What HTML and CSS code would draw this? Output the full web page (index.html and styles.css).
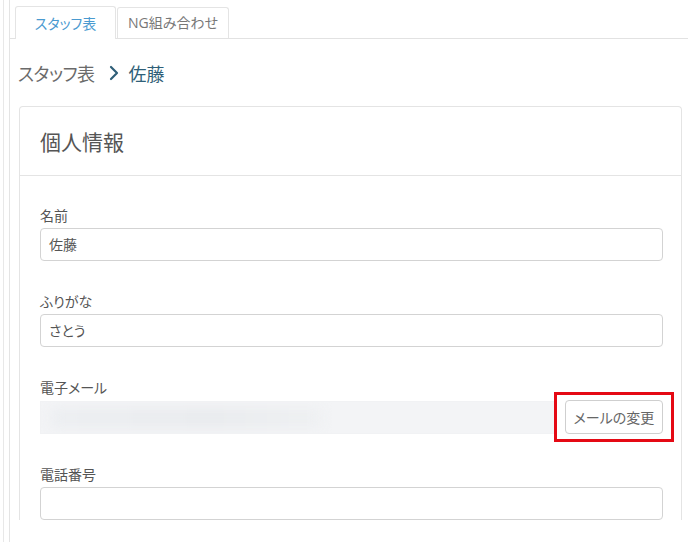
FILE: index.html
```
<!DOCTYPE html>
<html lang="ja">
<head>
    <meta charset="UTF-8">
    <meta name="viewport" content="width=device-width, initial-scale=1.0">
    <title>スタッフ表 - 佐藤</title>
    <link rel="stylesheet" href="styles.css">
</head>
<body>
    <div class="frame">
        <div class="panel">
            <!-- Tabs -->
            <div class="tabs">
                <div class="tab active">スタッフ表</div>
                <div class="tab">NG組み合わせ</div>
            </div>

            <div class="breadcrumb">
                <span class="crumb">スタッフ表</span>
                <svg class="chevron" width="10" height="16" viewBox="0 0 10 16">
                    <polyline points="2,2 8,8 2,14" fill="none" stroke="#2f5f78" stroke-width="2.2" stroke-linecap="round" stroke-linejoin="round"/>
                </svg>
                <span class="crumb current">佐藤</span>
            </div>

            <div class="card">
                <div class="card-header">個人情報</div>
                <div class="card-body">
                    <div class="field">
                        <label class="field-label">名前</label>
                        <div class="input">佐藤</div>
                    </div>
                    <div class="field">
                        <label class="field-label">ふりがな</label>
                        <div class="input">さとう</div>
                    </div>
                    <div class="field">
                        <label class="field-label">電子メール</label>
                        <div class="email-row">
                            <div class="input readonly">
                                <span class="blurred"></span>
                            </div>
                            <span class="button-wrap">
                                <button class="button">メールの変更</button>
                                <span class="highlight"></span>
                            </span>
                        </div>
                    </div>
                    <div class="field">
                        <label class="field-label">電話番号</label>
                        <div class="input"></div>
                    </div>
                </div>
            </div>
        </div>
    </div>
</body>
</html>
```
FILE: styles.css
```
body {
    margin: 0;
    font-family: "Noto Sans CJK JP", "Open Sans", sans-serif;
    font-feature-settings: "palt";
    color: #555;
    background: #fff;
    overflow: hidden;
}

.frame {
    margin-left: 3px;
    padding-left: 5px;
    border-left: 1px solid #e8e8e8;
    min-height: 100vh;
}

.panel {
    border-left: 1px solid #e4e4e4;
    min-height: 100vh;
    padding-top: 6px;
}

.tabs {
    display: flex;
    align-items: flex-end;
    padding-left: 5px;
    border-bottom: 1px solid #e2e2e2;
}

.tab {
    height: 31px;
    line-height: 31px;
    padding: 0 10px;
    font-size: 14px;
    color: #666;
    border: 1px solid #e4e4e4;
    border-bottom: none;
    border-radius: 3px 3px 0 0;
    margin-right: 1px;
}

.tab.active {
    width: 79px;
    height: 32px;
    line-height: 33px;
    text-align: center;
    color: #4a9ad0;
    background: #fff;
    margin-bottom: -1px;
}

.tab:not(.active) {
    width: 90px;
    height: 30px;
    line-height: 30px;
    text-align: center;
    color: #777;
    font-family: "Open Sans", "Noto Sans CJK JP", sans-serif;
}

.breadcrumb {
    display: flex;
    align-items: center;
    gap: 12px;
    margin: 21px 0 20px 8px;
    height: 26px;
    font-size: 18px;
}

.crumb {
    color: #6a6a6a;
    letter-spacing: -0.5px;
}

.crumb.current {
    color: #2f5f78;
    margin-left: -2px;
    letter-spacing: 0;
}

.chevron {
    margin-left: 2px;
}

.card {
    margin: 0 6px 0 9px;
    border: 1px solid #e4e4e4;
    border-bottom: none;
    border-radius: 4px 4px 0 0;
}

.card-header {
    height: 68px;
    line-height: 68px;
    padding: 0 20px;
    font-size: 21px;
    color: #555;
    border-bottom: 1px solid #e4e4e4;
}

.card-body {
    padding: 29px 18px 0 20px;
}

.field {
    margin-bottom: 30px;
}

.field-label {
    display: block;
    height: 20px;
    line-height: 20px;
    font-size: 14px;
    color: #555;
    margin-bottom: 3px;
}

.input {
    box-sizing: border-box;
    height: 33px;
    line-height: 31px;
    padding: 0 8px;
    font-size: 14px;
    color: #555;
    border: 1px solid #d3d3d3;
    border-radius: 4px;
}

.email-row {
    display: flex;
    align-items: center;
    gap: 8px;
    margin-top: 1px;
}

.input.readonly {
    flex: 1;
    background: #f3f4f6;
    border-color: #f1f2f4;
    border-radius: 0;
    position: relative;
    overflow: hidden;
}

.blurred {
    display: block;
    position: absolute;
    left: 10px;
    top: 6px;
    width: 270px;
    height: 20px;
    background: linear-gradient(to right, #eceef1, #e9ebee 60%, #eef0f2);
    filter: blur(6px);
}

.button-wrap {
    position: relative;
    display: inline-block;
}

.button {
    display: block;
    box-sizing: border-box;
    width: 98px;
    height: 34px;
    font-family: inherit;
    font-feature-settings: "palt";
    font-size: 14px;
    color: #666;
    background: #fff;
    border: 1px solid #cfcfcf;
    border-radius: 4px;
    cursor: pointer;
}

.highlight {
    position: absolute;
    top: -8px;
    left: -11px;
    right: -11px;
    bottom: -8px;
    border: 3px solid #e50914;
}
```
